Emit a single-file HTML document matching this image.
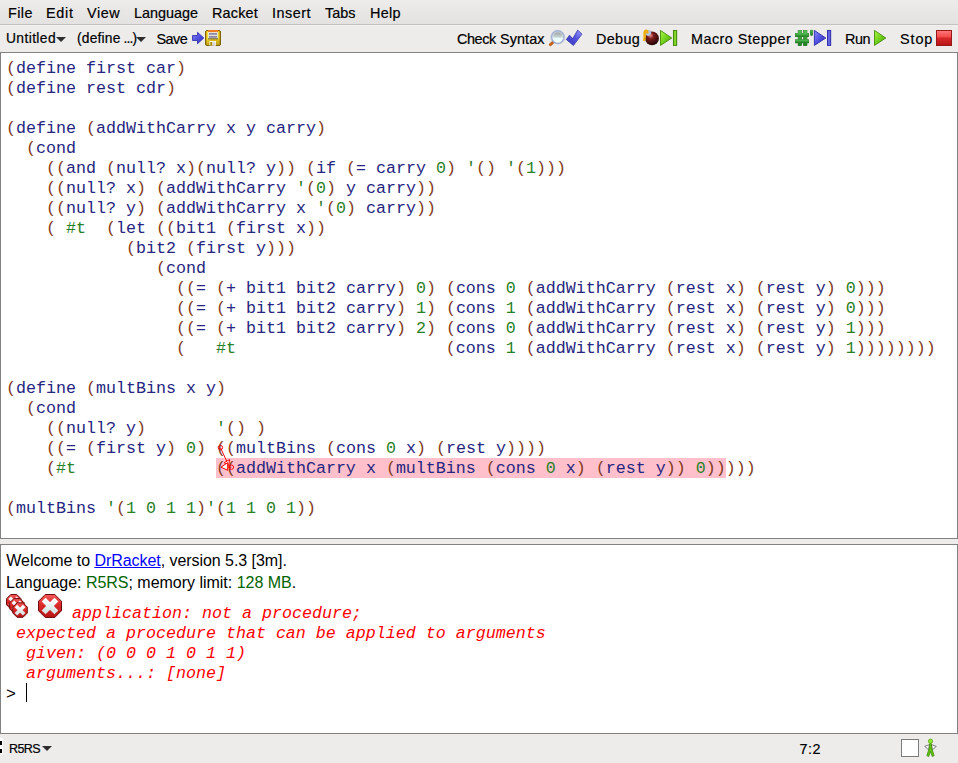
<!DOCTYPE html>
<html><head><meta charset="utf-8"><title>DrRacket</title>
<style>
html,body{margin:0;padding:0;}
body{width:958px;height:763px;overflow:hidden;position:relative;background:#edeceb;font-family:"Liberation Sans",sans-serif;color:#000;}
.abs{position:absolute;white-space:pre;}
#menubar{position:absolute;left:0;top:0;width:958px;height:24px;background:linear-gradient(#edeceb,#e3e2e0);}
#menuline{position:absolute;left:0;top:24px;width:958px;height:1px;background:#c3c2c0;}
#menuline2{position:absolute;left:0;top:25px;width:958px;height:1px;background:#f1f0ef;}
.m{position:absolute;top:3px;font-size:14.4px;line-height:20px;white-space:pre;color:#000;-webkit-text-stroke:.2px #000;}
.t{position:absolute;top:28.6px;font-size:13.8px;line-height:20px;white-space:pre;color:#000;-webkit-text-stroke:.2px #000;}
.t2{position:absolute;top:28.5px;font-size:14.4px;line-height:20px;white-space:pre;color:#000;-webkit-text-stroke:.2px #000;}
.tri{position:absolute;width:0;height:0;border-left:5px solid transparent;border-right:5px solid transparent;border-top:5.4px solid #2e2e2e;}
#editor{position:absolute;left:0;top:52px;width:956px;height:485px;background:#fff;border:1px solid #828282;}
#repl{position:absolute;left:0;top:544px;width:956px;height:188px;background:#fff;border:1px solid #828282;}
.cl{position:absolute;left:5px;height:20px;line-height:20px;font-family:"Liberation Mono",monospace;font-size:16.6667px;white-space:pre;}
.p{color:#843c24}.c{color:#298026}.i{color:#262680}
#hl{position:absolute;left:215px;top:405px;width:510px;height:20px;background:#ffc0cb;}
.rs{position:absolute;left:6px;font-size:16px;line-height:22px;white-space:pre;}
.re{position:absolute;height:20px;line-height:20px;font-family:"Liberation Mono",monospace;font-style:italic;font-size:16.6667px;white-space:pre;color:#ff0000;}
.g{color:#006400}
a{color:#0000ff;text-decoration:underline;}
#status{position:absolute;left:0;top:734px;width:958px;height:29px;}
</style></head><body>
<div id="menubar"></div><div id="menuline"></div><div id="menuline2"></div>
<div class="m" style="left:8px;letter-spacing:.4px">File</div>
<div class="m" style="left:46px;letter-spacing:.7px">Edit</div>
<div class="m" style="left:87px;letter-spacing:.6px">View</div>
<div class="m" style="left:134px">Language</div>
<div class="m" style="left:212px;letter-spacing:.2px">Racket</div>
<div class="m" style="left:272px;letter-spacing:.5px">Insert</div>
<div class="m" style="left:325px;letter-spacing:0px">Tabs</div>
<div class="m" style="left:370px;letter-spacing:.3px">Help</div>

<div class="t" style="left:6px;letter-spacing:.4px">Untitled</div><div class="tri" style="left:56.4px;top:36.6px"></div>
<div class="t" style="left:77px;letter-spacing:.2px">(define</div><div class="t" style="left:123.4px;letter-spacing:-.8px">...)</div><div class="tri" style="left:136.4px;top:36.6px"></div>
<div class="t2" style="left:156.5px;letter-spacing:-.5px">Save</div>
<div class="t2" style="left:457px;letter-spacing:-.4px">Check</div><div class="t2" style="left:500px;letter-spacing:.1px">Syntax</div>
<div class="t2" style="left:596px;letter-spacing:.35px">Debug</div>
<div class="t2" style="left:691px;letter-spacing:.45px">Macro Stepper</div>
<div class="t2" style="left:845px;letter-spacing:-.4px">Run</div>
<div class="t2" style="left:900px;letter-spacing:.9px">Stop</div>

<div id="editor">
<div id="hl"></div>
<div class="cl" style="top:6px"><span class="p">(</span><span class="i">define</span> <span class="i">first</span> <span class="i">car</span><span class="p">)</span></div>
<div class="cl" style="top:26px"><span class="p">(</span><span class="i">define</span> <span class="i">rest</span> <span class="i">cdr</span><span class="p">)</span></div>
<div class="cl" style="top:66px"><span class="p">(</span><span class="i">define</span> <span class="p">(</span><span class="i">addWithCarry</span> <span class="i">x</span> <span class="i">y</span> <span class="i">carry</span><span class="p">)</span></div>
<div class="cl" style="top:86px">  <span class="p">(</span><span class="i">cond</span></div>
<div class="cl" style="top:106px">    <span class="p">((</span><span class="i">and</span> <span class="p">(</span><span class="i">null?</span> <span class="i">x</span><span class="p">)(</span><span class="i">null?</span> <span class="i">y</span><span class="p">))</span> <span class="p">(</span><span class="i">if</span> <span class="p">(</span><span class="i">=</span> <span class="i">carry</span> <span class="c">0</span><span class="p">)</span> <span class="c">&#x27;</span><span class="p">()</span> <span class="c">&#x27;</span><span class="p">(</span><span class="c">1</span><span class="p">)))</span></div>
<div class="cl" style="top:126px">    <span class="p">((</span><span class="i">null?</span> <span class="i">x</span><span class="p">)</span> <span class="p">(</span><span class="i">addWithCarry</span> <span class="c">&#x27;</span><span class="p">(</span><span class="c">0</span><span class="p">)</span> <span class="i">y</span> <span class="i">carry</span><span class="p">))</span></div>
<div class="cl" style="top:146px">    <span class="p">((</span><span class="i">null?</span> <span class="i">y</span><span class="p">)</span> <span class="p">(</span><span class="i">addWithCarry</span> <span class="i">x</span> <span class="c">&#x27;</span><span class="p">(</span><span class="c">0</span><span class="p">)</span> <span class="i">carry</span><span class="p">))</span></div>
<div class="cl" style="top:166px">    <span class="p">(</span> <span class="c">#t</span>  <span class="p">(</span><span class="i">let</span> <span class="p">((</span><span class="i">bit1</span> <span class="p">(</span><span class="i">first</span> <span class="i">x</span><span class="p">))</span></div>
<div class="cl" style="top:186px">            <span class="p">(</span><span class="i">bit2</span> <span class="p">(</span><span class="i">first</span> <span class="i">y</span><span class="p">)))</span></div>
<div class="cl" style="top:206px">               <span class="p">(</span><span class="i">cond</span></div>
<div class="cl" style="top:226px">                 <span class="p">((</span><span class="i">=</span> <span class="p">(</span><span class="i">+</span> <span class="i">bit1</span> <span class="i">bit2</span> <span class="i">carry</span><span class="p">)</span> <span class="c">0</span><span class="p">)</span> <span class="p">(</span><span class="i">cons</span> <span class="c">0</span> <span class="p">(</span><span class="i">addWithCarry</span> <span class="p">(</span><span class="i">rest</span> <span class="i">x</span><span class="p">)</span> <span class="p">(</span><span class="i">rest</span> <span class="i">y</span><span class="p">)</span> <span class="c">0</span><span class="p">)))</span></div>
<div class="cl" style="top:246px">                 <span class="p">((</span><span class="i">=</span> <span class="p">(</span><span class="i">+</span> <span class="i">bit1</span> <span class="i">bit2</span> <span class="i">carry</span><span class="p">)</span> <span class="c">1</span><span class="p">)</span> <span class="p">(</span><span class="i">cons</span> <span class="c">1</span> <span class="p">(</span><span class="i">addWithCarry</span> <span class="p">(</span><span class="i">rest</span> <span class="i">x</span><span class="p">)</span> <span class="p">(</span><span class="i">rest</span> <span class="i">y</span><span class="p">)</span> <span class="c">0</span><span class="p">)))</span></div>
<div class="cl" style="top:266px">                 <span class="p">((</span><span class="i">=</span> <span class="p">(</span><span class="i">+</span> <span class="i">bit1</span> <span class="i">bit2</span> <span class="i">carry</span><span class="p">)</span> <span class="c">2</span><span class="p">)</span> <span class="p">(</span><span class="i">cons</span> <span class="c">0</span> <span class="p">(</span><span class="i">addWithCarry</span> <span class="p">(</span><span class="i">rest</span> <span class="i">x</span><span class="p">)</span> <span class="p">(</span><span class="i">rest</span> <span class="i">y</span><span class="p">)</span> <span class="c">1</span><span class="p">)))</span></div>
<div class="cl" style="top:286px">                 <span class="p">(</span>   <span class="c">#t</span>                     <span class="p">(</span><span class="i">cons</span> <span class="c">1</span> <span class="p">(</span><span class="i">addWithCarry</span> <span class="p">(</span><span class="i">rest</span> <span class="i">x</span><span class="p">)</span> <span class="p">(</span><span class="i">rest</span> <span class="i">y</span><span class="p">)</span> <span class="c">1</span><span class="p">))))))))</span></div>
<div class="cl" style="top:326px"><span class="p">(</span><span class="i">define</span> <span class="p">(</span><span class="i">multBins</span> <span class="i">x</span> <span class="i">y</span><span class="p">)</span></div>
<div class="cl" style="top:346px">  <span class="p">(</span><span class="i">cond</span></div>
<div class="cl" style="top:366px">    <span class="p">((</span><span class="i">null?</span> <span class="i">y</span><span class="p">)</span>       <span class="c">&#x27;</span><span class="p">()</span> <span class="p">)</span></div>
<div class="cl" style="top:386px">    <span class="p">((</span><span class="i">=</span> <span class="p">(</span><span class="i">first</span> <span class="i">y</span><span class="p">)</span> <span class="c">0</span><span class="p">)</span> <span class="p">((</span><span class="i">multBins</span> <span class="p">(</span><span class="i">cons</span> <span class="c">0</span> <span class="i">x</span><span class="p">)</span> <span class="p">(</span><span class="i">rest</span> <span class="i">y</span><span class="p">))))</span></div>
<div class="cl" style="top:406px">    <span class="p">(</span><span class="c">#t</span>              <span class="p">((</span><span class="i">addWithCarry</span> <span class="i">x</span> <span class="p">(</span><span class="i">multBins</span> <span class="p">(</span><span class="i">cons</span> <span class="c">0</span> <span class="i">x</span><span class="p">)</span> <span class="p">(</span><span class="i">rest</span> <span class="i">y</span><span class="p">))</span> <span class="c">0</span><span class="p">)))))</span></div>
<div class="cl" style="top:446px"><span class="p">(</span><span class="i">multBins</span> <span class="c">&#x27;</span><span class="p">(</span><span class="c">1</span> <span class="c">0</span> <span class="c">1</span> <span class="c">1</span><span class="p">)</span><span class="c">&#x27;</span><span class="p">(</span><span class="c">1</span> <span class="c">1</span> <span class="c">0</span> <span class="c">1</span><span class="p">))</span></div>
</div>

<div id="repl">
<div class="rs" style="top:5px;left:5.3px;letter-spacing:-.05px">Welcome to <a>DrRacket</a>, version 5.3 [3m].</div>
<div class="rs" style="top:27px;left:5px;letter-spacing:-.02px">Language: <span class="g">R5RS</span>; memory limit: <span class="g">128 MB</span>.</div>
<div class="re" style="left:71px;top:59px">application: not a procedure;</div>
<div class="re" style="left:5px;top:79px"> expected a procedure that can be applied to arguments</div>
<div class="re" style="left:5px;top:99px">  given: (0 0 0 1 0 1 1)</div>
<div class="re" style="left:5px;top:119px">  arguments...: [none]</div>
<div class="cl" style="top:140px;color:#000">&gt; </div>
<div style="position:absolute;left:25px;top:138px;width:1px;height:19px;background:#000"></div>
</div>

<div id="status">
<div style="position:absolute;left:0;top:4px;width:3px;height:16px;background:#fff"></div>
<div style="position:absolute;left:0;top:7px;width:2px;height:4px;background:#000"></div>
<div style="position:absolute;left:0;top:15px;width:2px;height:4px;background:#000"></div>
<div class="abs" style="left:9px;top:4.8px;font-size:12.5px;line-height:20px;color:#000;-webkit-text-stroke:.2px #000;letter-spacing:-.6px">R5RS</div>
<div class="tri" style="left:41.6px;top:12.2px"></div>
<div class="abs" style="left:799.6px;top:4.6px;font-size:14.4px;line-height:20px;color:#000;-webkit-text-stroke:.2px #000;letter-spacing:.5px">7:2</div>
<div style="position:absolute;left:901px;top:5px;width:16px;height:16px;background:#fff;border:1px solid #7c7c7c"></div>
</div>
<svg id="ov" width="958" height="763" viewBox="0 0 958 763" style="position:absolute;left:0;top:0;pointer-events:none">
<defs>
<linearGradient id="gStop" x1="0" y1="0" x2="0" y2="1"><stop offset="0" stop-color="#f45a5a"/><stop offset=".45" stop-color="#dc2a2a"/><stop offset="1" stop-color="#b81414"/></linearGradient>
<linearGradient id="gRed" x1="0" y1="0" x2="0" y2="1"><stop offset="0" stop-color="#ff7a7a"/><stop offset=".42" stop-color="#f24c4c"/><stop offset=".5" stop-color="#d92a2a"/><stop offset="1" stop-color="#b41414"/></linearGradient>
<linearGradient id="gBlue" x1="0" y1="0" x2="1" y2="1"><stop offset="0" stop-color="#8a8aff"/><stop offset=".5" stop-color="#5050e0"/><stop offset="1" stop-color="#3030b0"/></linearGradient>
<linearGradient id="gGreen" x1="0" y1="0" x2="1" y2="1"><stop offset="0" stop-color="#a8f848"/><stop offset=".5" stop-color="#70d01c"/><stop offset="1" stop-color="#489c08"/></linearGradient>
<radialGradient id="gBomb" cx=".4" cy=".3" r=".7"><stop offset="0" stop-color="#e88c8c"/><stop offset=".32" stop-color="#7c1c1c"/><stop offset="1" stop-color="#220404"/></radialGradient>
<linearGradient id="gLens" x1="0" y1="0" x2="0" y2="1"><stop offset="0" stop-color="#8e9696"/><stop offset=".5" stop-color="#c8d4d4"/><stop offset=".6" stop-color="#e8ffff"/><stop offset="1" stop-color="#f8ffff"/></linearGradient>
<linearGradient id="gYel" x1="0" y1="0" x2="1" y2="0"><stop offset="0" stop-color="#b89000"/><stop offset=".12" stop-color="#f6dc38"/><stop offset=".5" stop-color="#e6c212"/><stop offset=".88" stop-color="#eed028"/><stop offset="1" stop-color="#a07c00"/></linearGradient>
<linearGradient id="gBlue2" x1="1" y1="0" x2="0" y2="1"><stop offset="0" stop-color="#a0a0ff"/><stop offset=".45" stop-color="#5454e0"/><stop offset="1" stop-color="#3434b8"/></linearGradient>
<linearGradient id="gShade" x1="0" y1="0" x2="0" y2="1"><stop offset=".5" stop-color="#806000" stop-opacity="0"/><stop offset="1" stop-color="#806000" stop-opacity=".45"/></linearGradient>
<linearGradient id="gGBar" x1="0" y1="0" x2="1" y2="0"><stop offset="0" stop-color="#4c9c0a"/><stop offset=".5" stop-color="#96ee30"/><stop offset="1" stop-color="#4c9c0a"/></linearGradient>
<linearGradient id="gBBar" x1="0" y1="0" x2="1" y2="0"><stop offset="0" stop-color="#3838c0"/><stop offset=".45" stop-color="#7878f4"/><stop offset="1" stop-color="#3838c0"/></linearGradient>
<linearGradient id="gX" x1="0" y1="0" x2="0" y2="1"><stop offset="0" stop-color="#ffffff"/><stop offset=".5" stop-color="#e6f0f0"/><stop offset="1" stop-color="#d6e2e2"/></linearGradient>
<linearGradient id="gHash" x1="0" y1="0" x2="0" y2="1"><stop offset="0" stop-color="#58c058"/><stop offset="1" stop-color="#1e7a1e"/></linearGradient>
</defs>
<path d="M192.5 35.5 H197.5 V32.3 L203.8 38 L197.5 43.7 V40.5 H192.5 Z" fill="url(#gBlue)" stroke="#2828a8" stroke-width=".8" stroke-linejoin="round"/>
<rect x="205.5" y="30.5" width="15" height="15" rx="1.5" fill="url(#gYel)" stroke="#7c6200" stroke-width="1"/><rect x="206" y="31" width="14" height="14" rx="1" fill="url(#gShade)"/>
<rect x="208" y="30" width="10" height="2" fill="#f07a20"/>
<rect x="208" y="32" width="10" height="6.5" fill="#e4e2cc"/>
<rect x="209" y="33" width="8" height="1.8" fill="#8e8aa8"/><rect x="209" y="36" width="8" height="1.8" fill="#8e8aa8"/>
<rect x="208" y="38.3" width="10" height="1" fill="#6a6448"/>
<rect x="209.5" y="41" width="6.5" height="4.6" fill="#fbfbf4"/><rect x="210.3" y="42" width="2" height="3.6" fill="#a88a08"/><rect x="212.8" y="42" width="2.6" height="3.6" fill="#d8d8d8"/>
<path d="M553.3 42 L550.4 44.6" stroke="#c0601a" stroke-width="3" stroke-linecap="round"/>
<circle cx="557.8" cy="37.1" r="6.1" fill="url(#gLens)" stroke="#a6b4d6" stroke-width="1.5"/><circle cx="557.8" cy="37.1" r="5.1" fill="none" stroke="#f2f6ff" stroke-width=".6" opacity=".8"/>
<circle cx="557.8" cy="37.1" r="6.9" fill="none" stroke="#8c9cc0" stroke-width=".4"/>
<path d="M566.3 39.5 L569.5 35.2 L572.7 38.6 L577.7 30.1 L582 34.1 L573.4 45.5 Z" fill="url(#gBlue2)" stroke="#2c2ca8" stroke-width=".7" stroke-linejoin="round"/>
<circle cx="652" cy="38.4" r="6.9" fill="url(#gBomb)"/>
<circle cx="648.3" cy="33.1" r="2.8" fill="#bcc6d8" stroke="#8a94a8" stroke-width=".4"/>
<path d="M644.2 40 C645.4 37 643.8 33.6 645 31.4 C645.8 30.4 647 30.6 647.3 32.2" stroke="#f0ae08" stroke-width="2.5" fill="none" stroke-linecap="round"/>
<path d="M660.5 30.4 L671.8 38 L660.5 45.4 Z" fill="url(#gGreen)" stroke="#478a08" stroke-width=".9" stroke-linejoin="round"/>
<rect x="673.4" y="30.4" width="3.3" height="15" fill="url(#gGBar)" stroke="#3f8206" stroke-width=".9"/>
<g fill="#1c701c" stroke="#1c701c" stroke-width=".6"><rect x="798.1" y="30.3" width="3.3" height="15.2"/><rect x="803.6" y="30.3" width="3.4" height="15.2"/><rect x="795.4" y="33.5" width="13.3" height="3.1"/><rect x="795.4" y="39.8" width="13.3" height="3.1"/><path d="M810.3 30.3 h2.5 l-.4 5 h-1.7 z"/></g><g fill="url(#gHash)"><rect x="798.1" y="30.3" width="3.3" height="15.2"/><rect x="803.6" y="30.3" width="3.4" height="15.2"/><rect x="795.4" y="33.5" width="13.3" height="3.1"/><rect x="795.4" y="39.8" width="13.3" height="3.1"/><path d="M810.3 30.3 h2.5 l-.4 5 h-1.7 z"/></g>
<path d="M814.4 30.4 L825.8 38 L814.4 45.4 Z" fill="url(#gBlue)" stroke="#2c2ca8" stroke-width=".9" stroke-linejoin="round"/>
<rect x="827.5" y="30.4" width="3.2" height="15" fill="url(#gBBar)" stroke="#2a2aa4" stroke-width=".9"/>
<path d="M874.5 30.4 L885.8 38 L874.5 45.4 Z" fill="url(#gGreen)" stroke="#478a08" stroke-width=".9" stroke-linejoin="round"/>
<rect x="936.5" y="30.5" width="15" height="15" fill="url(#gRed)" stroke="#9a1818" stroke-width="1"/>
<polygon points="10.75,594.50 16.75,594.50 21.00,598.75 21.00,604.75 16.75,609.00 10.75,609.00 6.50,604.75 6.50,598.75" fill="url(#gStop)" stroke="#6e0a0a" stroke-width="1"/><path d="M9.64 597.64 L17.86 605.86 M17.86 597.64 L9.64 605.86" stroke="url(#gX)" stroke-width="3.50" stroke-linecap="butt" fill="none"/>
<polygon points="13.95,598.60 19.95,598.60 24.20,602.85 24.20,608.85 19.95,613.10 13.95,613.10 9.70,608.85 9.70,602.85" fill="url(#gStop)" stroke="#6e0a0a" stroke-width="1"/><path d="M12.84 601.74 L21.06 609.96 M21.06 601.74 L12.84 609.96" stroke="url(#gX)" stroke-width="3.50" stroke-linecap="butt" fill="none"/>
<polygon points="17.05,602.80 23.05,602.80 27.30,607.05 27.30,613.05 23.05,617.30 17.05,617.30 12.80,613.05 12.80,607.05" fill="url(#gStop)" stroke="#6e0a0a" stroke-width="1"/><path d="M15.94 605.94 L24.16 614.16 M24.16 605.94 L15.94 614.16" stroke="url(#gX)" stroke-width="3.60" stroke-linecap="butt" fill="none"/>
<polygon points="45.24,594.50 54.76,594.50 61.50,601.24 61.50,610.76 54.76,617.50 45.24,617.50 38.50,610.76 38.50,601.24" fill="url(#gStop)" stroke="#6e0a0a" stroke-width="1"/><path d="M43.64 599.64 L56.36 612.36 M56.36 599.64 L43.64 612.36" stroke="url(#gX)" stroke-width="5.60" stroke-linecap="butt" fill="none"/>
<g stroke="#ff0000" stroke-width="1" fill="none"><circle cx="220.4" cy="447.6" r="2.2"/><path d="M220.4 447.6 L227.6 463"/><path d="M229.6 459.6 L224.2 462.7 L228.6 465.8 Z" fill="#fff"/><circle cx="231.4" cy="467.2" r="2.2"/><path d="M231.4 467.2 L227.7 467.2"/><path d="M227.7 462.6 L227.7 470.3 L221 467.2 Z" fill="#fff"/></g>
<g><path d="M929.6 744.6 L924.7 746.4 L928.6 749.8 Z" fill="#fafafa" stroke="#6e6e6e" stroke-width=".9" stroke-linejoin="round"/><path d="M931.4 744.6 L936.3 746.4 L932.4 749.8 Z" fill="#fafafa" stroke="#6e6e6e" stroke-width=".9" stroke-linejoin="round"/><path d="M929.7 743.6 L931.3 743.6 L932 749 L934.2 755.6 L932.3 756.6 L930.5 751.6 L928.7 756.6 L926.8 755.6 L929 749 Z" fill="#62c212" stroke="#3a8404" stroke-width=".7" stroke-linejoin="round"/><circle cx="930.5" cy="741.2" r="2.2" fill="#8ee62e" stroke="#4a9a08" stroke-width=".6"/></g>
</svg>
</body></html>
